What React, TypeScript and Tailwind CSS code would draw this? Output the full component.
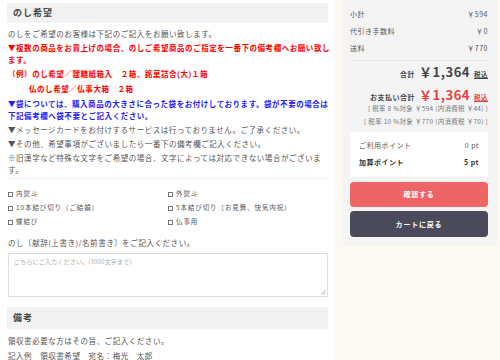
import React from "react";

const jp = { fontFamily: '"Noto Sans CJK JP", "Noto Sans", sans-serif' };

function Check({ label }: { label: string }) {
  return (
    <div className="flex items-center gap-[3px] h-[14px]">
      <span className="inline-block w-[5px] h-[5px] border border-[#777] bg-white" />
      <span>{label}</span>
    </div>
  );
}

export default function App() {
  return (
    <div className="w-[500px] h-[360px] overflow-hidden flex bg-white text-[#555]" style={jp}>
      <div className="w-[335px] shrink-0 pl-[7px] pr-[7px] pt-[3px]">
        <div className="h-[20px] bg-[#f2f2f2] flex items-center pl-[6px] text-[9px] font-bold tracking-[1px] text-[#444]">
          のし希望
        </div>
        <div className="pl-[1px] text-[7.5px] leading-[12px] tracking-[0.55px] whitespace-nowrap">
          <p className="mt-[5px]">のしをご希望のお客様は下記のご記入をお願い致します。</p>
          <p className="mt-[2px] text-[#f00] font-bold">
            ▼複数の商品をお買上げの場合、のしご希望商品のご指定を一番下の備考欄へお願い致し
            <br />
            ます。
          </p>
          <p className="mt-[2px] text-[#f00] font-bold">（例）のし希望／靉糖紙箱入　２箱、銘菓詰合(大)１箱</p>
          <p className="mt-[3px] text-[#f00] font-bold pl-[21px]">仏のし希望／仏事大箱　２箱</p>
          <p className="mt-[3px] text-[#1d1dff] font-bold">
            ▼袋については、購入商品の大きさに合った袋をお付けしております。袋が不要の場合は
            <br />
            下記備考欄へ袋不要とご記入ください。
          </p>
          <p className="mt-[2px]">▼メッセージカードをお付けするサービスは行っておりません。ご了承ください。</p>
          <p className="mt-[2px]">▼その他、希望事項がございましたら一番下の備考欄ご記入ください。</p>
          <p className="mt-[2px]">
            ※旧漢字など特殊な文字をご希望の場合、文字によっては対応できない場合がございま
            <br />
            す。
          </p>
        </div>
        <div className="mt-[2px] border-t border-[#eee]" />
        <div className="mt-[8px] pl-[1px] grid grid-cols-2 text-[6.5px] tracking-[0.9px]">
          <Check label="内熨斗" />
          <Check label="外熨斗" />
          <Check label="10本結び切り（ご結婚）" />
          <Check label="5本結び切り（お見舞、快気内祝）" />
          <Check label="蝶結び" />
          <Check label="仏事用" />
        </div>
        <p className="mt-[8px] pl-[1px] text-[7.5px] leading-[12px] tracking-[0.55px]">
          のし〔献辞(上書き)/名前書き〕をご記入ください。
        </p>
        <div className="mt-[4px] ml-[1px] h-[44px] border border-[#ddd] relative px-[5px] pt-[3px] text-[6px] text-[#aaa] tracking-[0.2px]">
          こちらにご入力ください。(3000文字まで)
          <svg className="absolute right-[1px] bottom-[1px]" width="6" height="6" viewBox="0 0 6 6">
            <path d="M5.5 1 L1 5.5 M5.5 3 L3 5.5 M5.5 5 L5 5.5" stroke="#999" strokeWidth="0.7" />
          </svg>
        </div>
        <div className="mt-[10px] h-[22px] bg-[#f2f2f2] flex items-center pl-[6px] text-[9px] font-bold tracking-[1px] text-[#444]">
          備考
        </div>
        <div className="pl-[1px] text-[7.5px] leading-[12px] tracking-[0.55px]">
          <p className="mt-[6px]">領収書必要な方はその旨、ご記入ください。</p>
          <p className="mt-[3px]">記入例　領収書希望　宛名：梅光　太郎</p>
        </div>
      </div>
      <div className="flex-1 bg-[#fcf9f4] pl-[8px] pr-[3px]">
        <div className="w-[154px] h-[245px] bg-[#f4f4f4] pl-[7px] pr-[9px] pt-[6px] text-[7px] tracking-[0.5px] text-[#555]">
          <div className="flex justify-between h-[17px] items-center">
            <span>小計</span>
            <span>￥594</span>
          </div>
          <div className="flex justify-between h-[17px] items-center">
            <span>代引き手数料</span>
            <span>￥0</span>
          </div>
          <div className="flex justify-between h-[17px] items-center">
            <span>送料</span>
            <span>￥770</span>
          </div>
          <div className="border-t border-[#e8e8e8] mt-[3px]" />
          <div className="mt-[1px] h-[18px] flex items-center justify-end">
            <div className="flex items-baseline gap-[4px] leading-none text-[#444]">
              <span className="font-bold text-[7px]">合計</span>
              <span className="font-bold text-[13px] tracking-[0.5px]">￥1,364</span>
              <span className="font-bold text-[6.5px] underline">税込</span>
            </div>
          </div>
          <div className="mt-[6px] h-[16px] flex items-center justify-end">
            <div className="flex items-baseline gap-[4px] leading-none text-[#e94040]">
              <span className="font-bold text-[7px] text-[#444]">お支払い合計</span>
              <span className="font-bold text-[13px] tracking-[0.5px]">￥1,364</span>
              <span className="font-bold text-[6.5px] underline">税込</span>
            </div>
          </div>
          <div className="text-right text-[6.5px] tracking-[0.3px] text-[#777] leading-[13px] whitespace-nowrap">
            [ 税率 8 %対象 ￥594 (内消費税 ￥44) ]
          </div>
          <div className="text-right text-[6.5px] tracking-[0.3px] text-[#777] leading-[13px] whitespace-nowrap">
            [ 税率 10 %対象 ￥770 (内消費税 ￥70) ]
          </div>
          <div className="mt-[4px] bg-white h-[45px] px-[9px] pt-[5px]">
            <div className="flex justify-between h-[17px] items-center">
              <span>ご利用ポイント</span>
              <span>0 pt</span>
            </div>
            <div className="flex justify-between h-[17px] items-center font-bold text-[#333]">
              <span>加算ポイント</span>
              <span>5 pt</span>
            </div>
          </div>
          <div className="mt-[5px] h-[25px] rounded-[4px] bg-[#ee6568] text-white font-bold text-[7px] flex items-center justify-center tracking-[0.8px]">
            確認する
          </div>
          <div className="mt-[4px] h-[26px] rounded-[4px] bg-[#4b4a5a] text-white font-bold text-[7px] flex items-center justify-center tracking-[0.8px]">
            カートに戻る
          </div>
        </div>
      </div>
    </div>
  );
}
